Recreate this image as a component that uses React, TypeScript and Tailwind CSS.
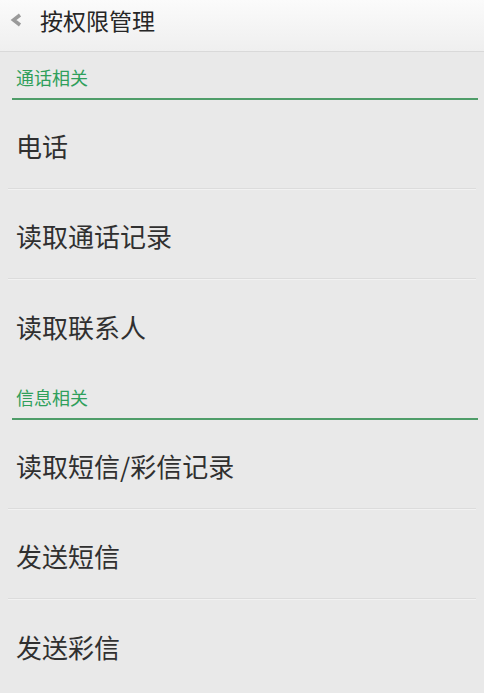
import React from "react";

const font = { fontFamily: '"Noto Sans CJK SC", "Noto Sans", sans-serif' };

function Section({ title, tall }: { title: string; tall?: boolean }) {
  return (
    <div className={tall ? "h-[50px] flex flex-col justify-end" : "h-[48px] flex flex-col justify-end"}>
      <div className="pl-[16px] text-[18px] leading-none text-[#2f9f5b] pb-[12px]">{title}</div>
      <div className="ml-[12px] mr-[6px] h-[2px] bg-[#4f9d69]" />
    </div>
  );
}

function Row({ label, divider }: { label: string; divider: boolean }) {
  return (
    <div className="h-[90px] flex flex-col">
      <div className="flex-1 flex items-center pl-[16px] pt-[3px] text-[26px] leading-none text-[#303030]">{label}</div>
      {divider ? (
        <div className="ml-[8px] mr-[8px]">
          <div className="h-px bg-[#dcdcdc]" />
          <div className="h-px bg-[#f2f2f2]" />
        </div>
      ) : null}
    </div>
  );
}

export default function App() {
  return (
    <div className="w-[484px] h-[693px] bg-[#e9e9e9] overflow-hidden" style={font}>
      <div className="h-[52px] flex items-center bg-gradient-to-b from-[#fbfbfb] to-[#efefef] border-b border-[#d9d9d9]">
        <div className="w-[40px] flex items-center justify-start pl-[10px] -mt-[11px]">
          <svg width="14" height="14" viewBox="0 0 14 14">
            <polyline points="10,2 3.5,7 10,12" fill="none" stroke="#9a9a9a" strokeWidth="3.5" strokeLinejoin="miter" />
          </svg>
        </div>
        <div className="text-[23px] leading-none text-[#262626] -mt-[11px]">按权限管理</div>
      </div>
      <Section title="通话相关" />
      <Row label="电话" divider />
      <Row label="读取通话记录" divider />
      <Row label="读取联系人" divider={false} />
      <Section title="信息相关" tall />
      <Row label="读取短信/彩信记录" divider />
      <Row label="发送短信" divider />
      <Row label="发送彩信" divider={false} />
    </div>
  );
}
